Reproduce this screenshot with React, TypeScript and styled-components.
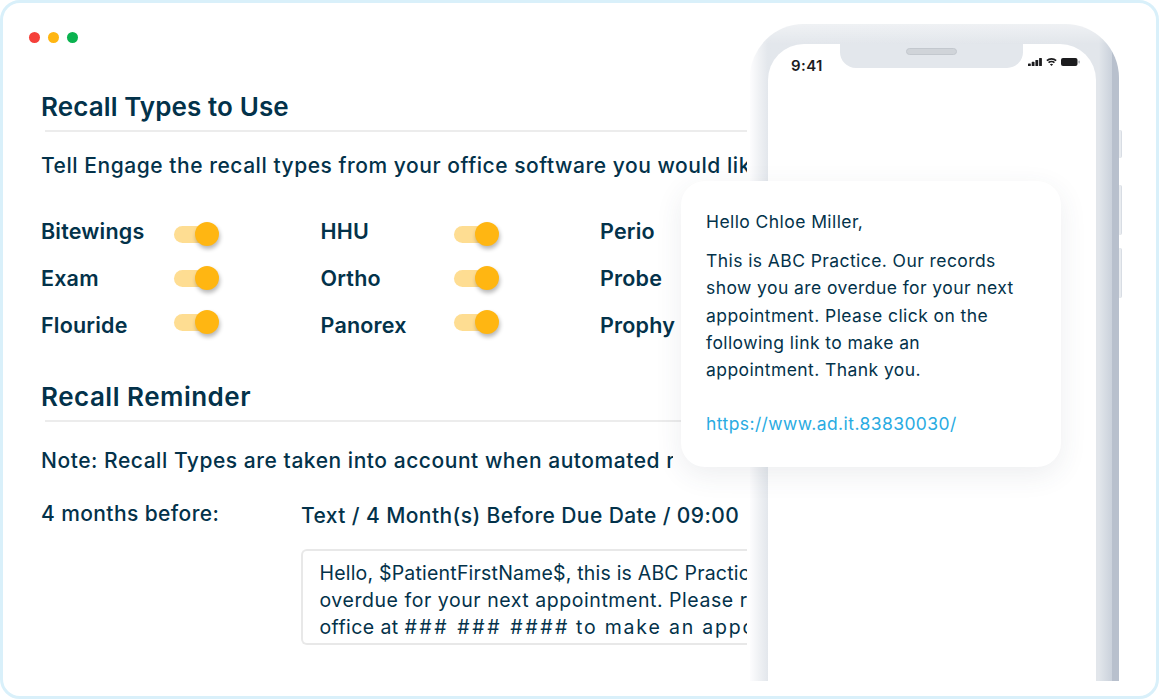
import styled, { createGlobalStyle } from 'styled-components'

const GlobalStyle = createGlobalStyle`
  html, body {
    background: #ffffff;
    margin: 0;
    padding: 0;
  }
`

const Frame = styled.div`
  border: 3px solid #d9f0fa;
  border-radius: 20px;
  box-sizing: border-box;
  color: #03324a;
  font-family: Inter, "Open Sans", "Liberation Sans", sans-serif;
  height: 699px;
  overflow: hidden;
  position: relative;
  width: 1159px;
`

const Dots = styled.div`
  display: flex;
  gap: 8px;
  padding: 29px 0 0 26px;
`

const Dot = styled.span<{ $color: string }>`
  background: ${p => p.$color};
  border-radius: 50%;
  height: 11px;
  width: 11px;
`

const Content = styled.div`
  overflow: hidden;
  padding-left: 38px;
  white-space: nowrap;
  width: 706px;
`

const Heading = styled.h2<{ $top: number, $spacing: number }>`
  font-size: 26px;
  font-weight: 600;
  height: 38px;
  letter-spacing: ${p => p.$spacing}px;
  line-height: 30px;
  margin: ${p => p.$top}px 0 0;

  &::after {
    background: #ececec;
    content: '';
    display: block;
    height: 2px;
    margin: 38px 0 0 4px;
    position: relative;
    top: -30px;
  }
`

const Para = styled.p<{ $top: number }>`
  font-size: 21px;
  font-weight: 500;
  letter-spacing: 0.54px;
  line-height: 28px;
  margin: ${p => p.$top}px 0 0;
`

const Note = styled(Para)`
  overflow: hidden;
  width: 632px;
`

const ToggleGrid = styled.div`
  display: grid;
  grid-auto-rows: 47px;
  grid-template-columns: repeat(3, 279.5px);
  margin-top: 29px;
`

const ToggleCell = styled.div`
  align-items: center;
  display: flex;
`

const ToggleLabel = styled.span`
  font-size: 21.5px;
  font-weight: 600;
  letter-spacing: 0.2px;
  margin-bottom: 4px;
  width: 133px;
`

const Toggle = styled.span<{ $nudge: number }>`
  background: #fedd92;
  border-radius: 9px;
  display: block;
  height: 17px;
  margin-top: ${p => p.$nudge}px;
  position: relative;
  width: 36px;
`

const Knob = styled.span`
  background: #ffb612;
  border-radius: 50%;
  box-shadow: 1px 3px 4px rgba(0, 0, 0, 0.28);
  height: 24px;
  position: absolute;
  right: -9px;
  top: -4px;
  width: 24px;
`

const ScheduleRow = styled.div`
  display: grid;
  grid-template-columns: 260px auto;
  margin-top: 25px;
`

const ScheduleName = styled.span`
  font-size: 21px;
  font-weight: 500;
  letter-spacing: 0.4px;
  line-height: 28px;
`

const ScheduleValue = styled.span`
  font-size: 21px;
  font-weight: 500;
  letter-spacing: 0.41px;
  line-height: 28px;
  margin-top: 2px;
`

const MessageBox = styled.div`
  border: 2px solid #e8e8e8;
  border-right: 0;
  border-radius: 6px 0 0 6px;
  box-sizing: border-box;
  font-size: 19.5px;
  height: 96px;
  line-height: 27px;
  margin: 19px 0 0 260px;
  overflow: hidden;
  padding: 9px 0 0 16.5px;
`

const MessageLine = styled.span<{ $spacing: number }>`
  display: block;
  letter-spacing: ${p => p.$spacing}px;
`

const MessageRun = styled.span<{ $spacing: number }>`
  letter-spacing: ${p => p.$spacing}px;
`

const Phone = styled.div`
  background:
    linear-gradient(180deg, rgba(255, 255, 255, 0.45) 0, rgba(255, 255, 255, 0) 20px),
    linear-gradient(90deg, #fdfdfe 0, #eff1f4 2.5%, #e3e7ec 4.8%, #e2e6eb 94.5%, #cbd2dc 98%, #b8c0cd 98.2%, #b8c0cd 100%);
  border-radius: 54px 54px 0 0;
  box-sizing: border-box;
  display: flex;
  flex-direction: column;
  height: 657px;
  left: 747px;
  padding: 20px 23px 0 18px;
  position: absolute;
  top: 21px;
  width: 369px;
`

const SideButton = styled.span<{ $top: number, $height: number }>`
  background: #e9ecf0;
  border-radius: 0 2px 2px 0;
  border-right: 1px solid #d8dde4;
  height: ${p => p.$height}px;
  position: absolute;
  right: -3px;
  top: ${p => p.$top}px;
  width: 2px;
`

const Screen = styled.div`
  background: #ffffff;
  border-radius: 36px 36px 0 0;
  flex: 1;
  position: relative;
`

const StatusBar = styled.div`
  align-items: flex-start;
  display: grid;
  grid-template-columns: 72px 183px 1fr;
`

const Time = styled.span`
  color: #1c1c1e;
  font-size: 15px;
  font-weight: 600;
  letter-spacing: 0.4px;
  line-height: 18px;
  padding: 13px 0 0 23px;
`

const Notch = styled.div`
  background: #e3e7ec;
  border-radius: 0 0 16px 16px;
  box-sizing: border-box;
  display: flex;
  height: 24px;
  justify-content: center;
  padding-top: 4px;
`

const Speaker = styled.span`
  background: #d0d4d9;
  border: 1px solid #c3c8ce;
  border-radius: 4px;
  box-sizing: border-box;
  height: 7px;
  width: 51px;
`

const StatusIcons = styled.div`
  align-items: center;
  display: flex;
  gap: 4px;
  padding: 13px 0 0 5px;
`

const Bubble = styled.div`
  background: #ffffff;
  border-radius: 24px;
  box-shadow: 0 8px 28px rgba(60, 70, 90, 0.09);
  box-sizing: border-box;
  font-size: 17.5px;
  height: 286px;
  left: 678px;
  letter-spacing: 0.42px;
  line-height: 27.2px;
  padding: 27px 20px 0 25px;
  position: absolute;
  top: 178px;
  width: 380px;
`

const BubbleText = styled.p<{ $top: number }>`
  margin: ${p => p.$top}px 0 0;
`

const BubbleLink = styled.a`
  color: #29abe2;
  display: block;
  margin-top: 27px;
  text-decoration: none;
`

const rows = [
  ['Bitewings', 'HHU', 'Perio'],
  ['Exam', 'Ortho', 'Probe'],
  ['Flouride', 'Panorex', 'Prophy']
]

// the knobs sit a little off the label rows in the reference
const rowNudge = [4, -3, -8]

function StatusGlyphs (): JSX.Element {
  return (
    <>
      <svg width='14' height='8' viewBox='0 0 14 8' fill='#1c1c1e'>
        <rect x='0' y='5.4' width='2.8' height='2.6' rx='0.6' />
        <rect x='3.7' y='3.8' width='2.8' height='4.2' rx='0.6' />
        <rect x='7.4' y='2' width='2.8' height='6' rx='0.6' />
        <rect x='11.1' y='0' width='2.8' height='8' rx='0.6' />
      </svg>
      <svg width='11' height='10' viewBox='0 0 13 10' fill='none' stroke='#1c1c1e' strokeWidth='1.9'>
        <path d='M1 3.4C4 .6 9 .6 12 3.4' />
        <path d='M3 5.8C4.9 4.1 8.1 4.1 10 5.8' />
        <path d='M6.5 9.8 4.6 7.8C5.7 6.9 7.3 6.9 8.4 7.8Z' fill='#1c1c1e' stroke='none' />
      </svg>
      <svg width='19' height='8' viewBox='0 0 19 8'>
        <rect x='0' y='0' width='16.5' height='8' rx='2' fill='#1c1c1e' />
        <rect x='17.4' y='2.6' width='1.4' height='2.8' rx='0.7' fill='#a9adb3' />
      </svg>
    </>
  )
}

function App (): JSX.Element {
  return (
    <Frame>
      <GlobalStyle />
      <Dots>
        <Dot $color='#f5403a' />
        <Dot $color='#ffb612' />
        <Dot $color='#0ab24f' />
      </Dots>
      <Content>
        <Heading $top={49} $spacing={0.1}>Recall Types to Use</Heading>
        <Para $top={22}>Tell Engage the recall types from your office software you would like to use for reminders</Para>
        <ToggleGrid>
          {rows.map((row, r) => row.map(name => (
            <ToggleCell key={name}>
              <ToggleLabel>{name}</ToggleLabel>
              <Toggle $nudge={rowNudge[r]}><Knob /></Toggle>
            </ToggleCell>
          )))}
        </ToggleGrid>
        <Heading $top={32} $spacing={0.5}>Recall Reminder</Heading>
        <Note $top={27}>Note: Recall Types are taken into account when automated reminders are sent</Note>
        <ScheduleRow>
          <ScheduleName>4 months before:</ScheduleName>
          <ScheduleValue>Text / 4 Month(s) Before Due Date / 09:00</ScheduleValue>
        </ScheduleRow>
        <MessageBox>
          <MessageLine $spacing={0.2}>Hello, $PatientFirstName$, this is ABC Practice. You are</MessageLine>
          <MessageLine $spacing={0.55}>overdue for your next appointment. Please reach our</MessageLine>
          <MessageLine $spacing={0.4}>
            office at <MessageRun $spacing={2.6}>### ### ####</MessageRun> <MessageRun $spacing={1.8}>to make an appointment.</MessageRun>
          </MessageLine>
        </MessageBox>
      </Content>
      <Phone>
        <SideButton $top={106} $height={28} />
        <SideButton $top={161} $height={50} />
        <SideButton $top={224} $height={50} />
        <Screen>
          <StatusBar>
            <Time>9:41</Time>
            <Notch><Speaker /></Notch>
            <StatusIcons><StatusGlyphs /></StatusIcons>
          </StatusBar>
        </Screen>
      </Phone>
      <Bubble>
        <BubbleText $top={0}>Hello Chloe Miller,</BubbleText>
        <BubbleText $top={12}>
          This is ABC Practice. Our records<br />
          show you are overdue for your next<br />
          appointment. Please click on the<br />
          following link to make an<br />
          appointment. Thank you.
        </BubbleText>
        <BubbleLink>https://www.ad.it.83830030/</BubbleLink>
      </Bubble>
    </Frame>
  )
}

export default App
